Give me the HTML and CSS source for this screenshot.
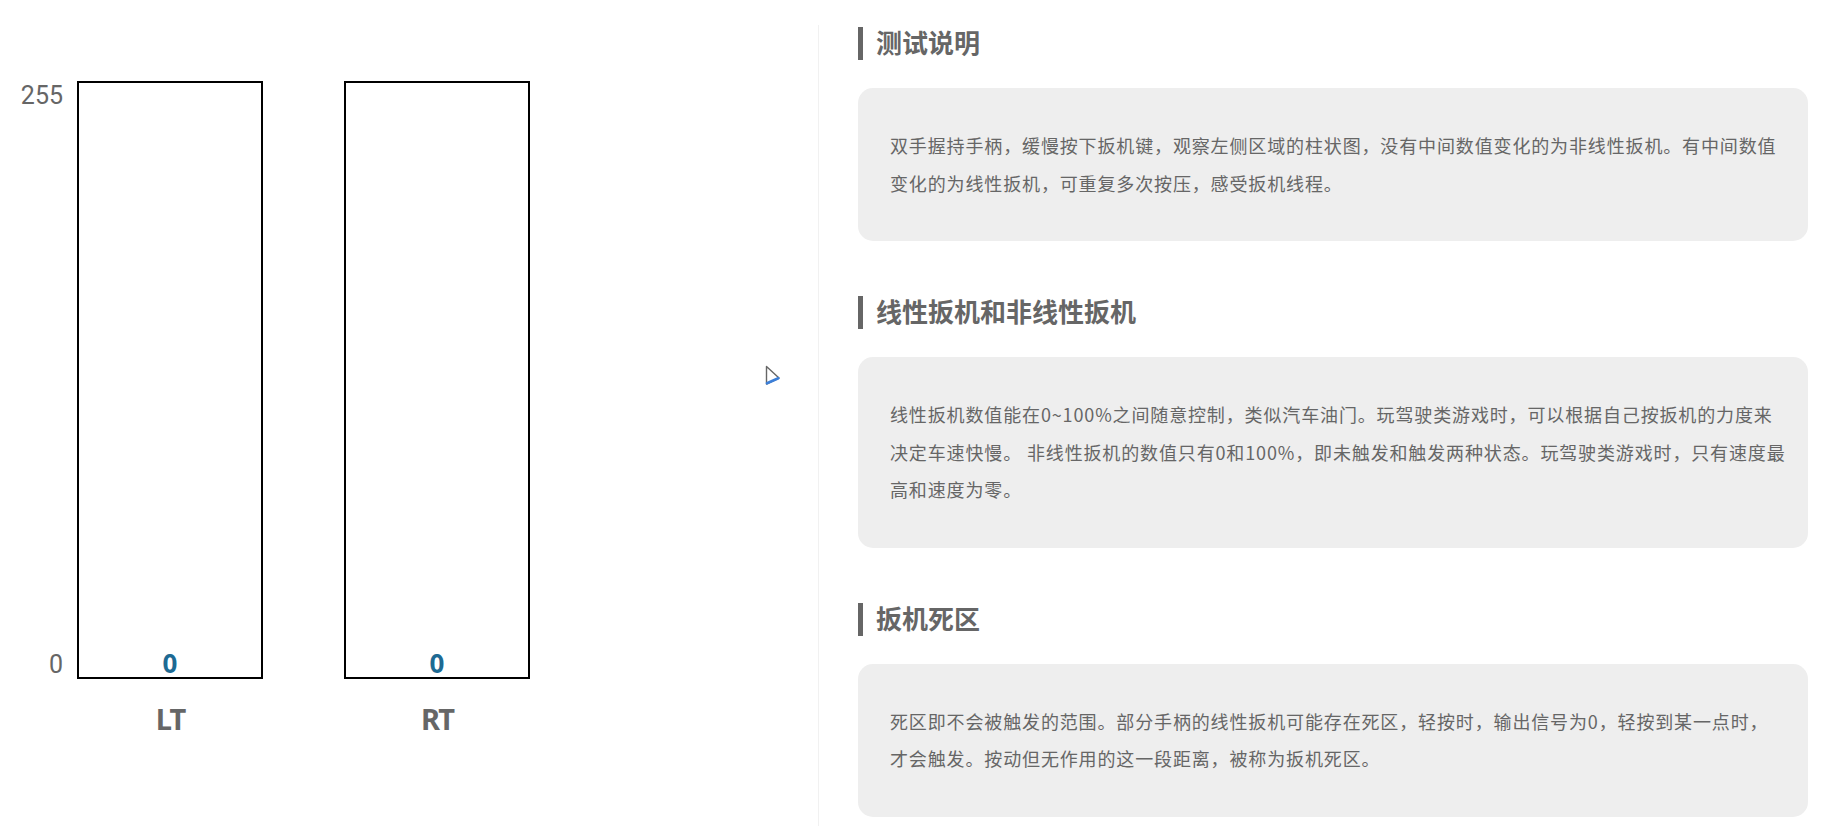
FILE: index.html
```html
<!DOCTYPE html>
<html lang="zh-CN">
<head>
    <meta charset="UTF-8">
    <meta name="viewport" content="width=device-width, initial-scale=1.0">
    <title>扳机测试</title>
    <link rel="stylesheet" href="styles.css">
</head>
<body>
    <div class="page">
        <div class="left">
            <div class="chart">
                <div class="axis">
                    <span>255</span>
                    <span>0</span>
                </div>
                <div class="bar-col">
                    <div class="bar"><span class="value">0</span></div>
                    <div class="bar-name">LT</div>
                </div>
                <div class="bar-col">
                    <div class="bar"><span class="value">0</span></div>
                    <div class="bar-name">RT</div>
                </div>
            </div>
        </div>

        <div class="right">
            <div class="section">
                <h2 class="title">测试说明</h2>
                <div class="card">双手握持手柄，缓慢按下扳机键，观察左侧区域的柱状图，没有中间数值变化的为非线性扳机。有中间数值变化的为线性扳机，可重复多次按压，感受扳机线程。</div>
            </div>
            <div class="section">
                <h2 class="title">线性扳机和非线性扳机</h2>
                <div class="card">线性扳机数值能在0~100%之间随意控制，类似汽车油门。玩驾驶类游戏时，可以根据自己按扳机的力度来决定车速快慢。 非线性扳机的数值只有0和100%，即未触发和触发两种状态。玩驾驶类游戏时，只有速度最高和速度为零。</div>
            </div>
            <div class="section">
                <h2 class="title">扳机死区</h2>
                <div class="card">死区即不会被触发的范围。部分手柄的线性扳机可能存在死区，轻按时，输出信号为0，轻按到某一点时，才会触发。按动但无作用的这一段距离，被称为扳机死区。</div>
            </div>
        </div>
    </div>

    <!-- mouse pointer left in the capture -->
    <svg class="pointer" width="16" height="21" viewBox="0 0 16 21">
        <path d="M1.5 1.5 L1.5 19 L14 13 Z" fill="#fff" stroke="#666" stroke-width="1.4" stroke-linejoin="round"/>
        <path d="M2 18.3 L13.3 13.2" stroke="#3b7fd9" stroke-width="2.6" stroke-linecap="round"/>
    </svg>
</body>
</html>
```

FILE: styles.css
```css
body {
    margin: 0;
    font-family: "Noto Sans", "Noto Sans CJK SC", sans-serif;
    color: #666;
    background: #fff;
}

.page {
    display: flex;
    height: 826px;
    overflow: hidden;
}

.left {
    width: 818px;
    flex: none;
}

.chart {
    display: flex;
    padding-top: 81px;
}

.axis {
    width: 63px;
    height: 598px;
    display: flex;
    flex-direction: column;
    justify-content: space-between;
    align-items: flex-end;
    font-family: Roboto, sans-serif;
    font-size: 25px;
    line-height: 28px;
    color: #666;
}

.axis span:first-child {
    margin-top: 1px;
}

.bar-col {
    width: 186px;
    margin-left: 14px;
    display: flex;
    flex-direction: column;
    align-items: center;
}

.bar-col + .bar-col {
    margin-left: 81px;
}

.bar {
    width: 100%;
    height: 598px;
    box-sizing: border-box;
    border: 2px solid #000;
    display: flex;
    align-items: flex-end;
    justify-content: center;
}

.value {
    font-size: 26px;
    font-weight: bold;
    line-height: 26px;
    color: #1d6a93;
    padding-bottom: 1px;
}

.bar-name {
    margin-top: 25px;
    font-size: 29px;
    line-height: 29px;
    font-weight: bold;
    letter-spacing: -2px;
    color: #666;
}

.right {
    flex: 1;
    margin-top: 25px;
    padding: 2px 15px 0 39px;
    border-left: 1px solid #f1f1f1;
}

.section {
    margin-bottom: 55px;
}

.title {
    margin: 0 0 28px;
    height: 33px;
    line-height: 33px;
    border-left: 5px solid #666;
    padding-left: 13px;
    font-size: 26px;
    font-weight: bold;
    color: #666;
}

.card {
    background: #eeeeee;
    border-radius: 15px;
    padding: 39px 22px 39px 32px;
    font-family: "Noto Sans CJK SC", "Noto Sans", sans-serif;
    font-size: 18px;
    letter-spacing: 0.86px;
    line-height: 37.5px;
    color: #666;
}

.pointer {
    position: absolute;
    left: 765px;
    top: 365px;
}
```
